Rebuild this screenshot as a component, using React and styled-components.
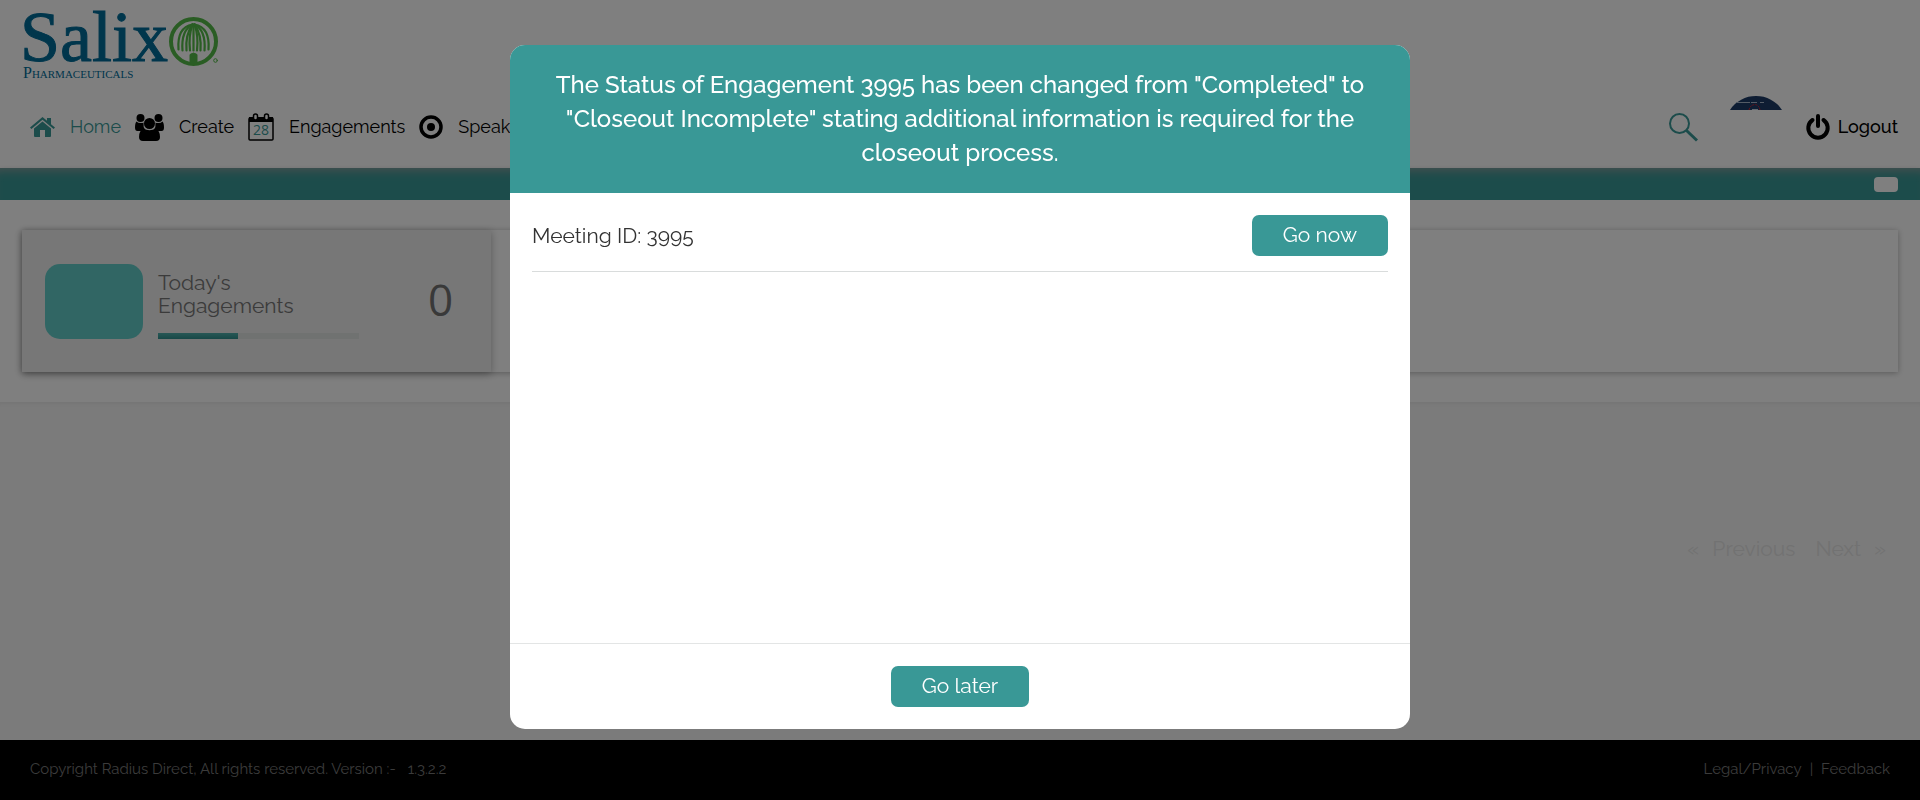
import React from "react";
import styled, { createGlobalStyle } from "styled-components";

const teal = "#399896";
const body = `"Raleway", "Lato", sans-serif`;

const GlobalStyle = createGlobalStyle`
  *, *::before, *::after { box-sizing: border-box; }
  body {
    margin: 0;
    background: #f7f7f7;
    color: #333;
    font-family: ${body};
    font-size: 21px;
  }
  button { font: inherit; border: 0; background: none; padding: 0; cursor: pointer; }
  a { color: inherit; text-decoration: none; }
  svg { display: block; flex: none; overflow: visible; }
`;

const Page = styled.div`
  min-height: 100vh;
  display: flex;
  flex-direction: column;
`;

const Header = styled.header`
  background: #fff;
`;

const LogoLink = styled.a`
  display: block;
  height: 86px;
  padding-left: 20px;
`;

const NavRow = styled.div`
  display: flex;
  justify-content: space-between;
  align-items: center;
  height: 82px;
  padding: 0 22px 0 30px;
`;

const Nav = styled.nav`
  display: flex;
  gap: 14px;
`;

const NavItem = styled.a`
  display: flex;
  align-items: center;
  gap: 15px;
  font-size: 18px;
  line-height: 28px;
  white-space: nowrap;
  color: ${(p) => (p.$active ? teal : "#000")};
`;

const Tools = styled.div`
  display: flex;
  align-items: center;
`;

const SearchButton = styled.button`
  margin-right: 32px;
`;

const Avatar = styled.span`
  margin-right: 24px;
`;

const LogoutButton = styled.button`
  display: flex;
  align-items: center;
  gap: 8px;
  color: #000;
  font-size: 18px;
  font-weight: 500;
  line-height: 28px;
`;

const Ribbon = styled.div`
  display: flex;
  justify-content: flex-end;
  align-items: center;
  height: 32px;
  padding: 0 22px;
  background: ${teal};
  box-shadow: inset 0 10px 10px -7px rgba(160, 160, 160, 0.8), 0 2px 6px rgba(0, 0, 0, 0.2);
`;

const RibbonButton = styled.button`
  width: 24px;
  height: 15px;
  border-radius: 4px;
  background: #fff;
`;

const Summary = styled.section`
  padding: 30px 22px;
  background: #fff;
`;

const Panel = styled.div`
  display: flex;
  min-height: 142px;
  box-shadow: 0 1px 6px rgba(0, 0, 0, 0.3);
`;

const StatCard = styled.article`
  width: 25%;
  min-width: 400px;
  display: flex;
  align-items: center;
  padding: 0 23px;
  background: #eee;
  box-shadow: 0 2px 8px rgba(0, 0, 0, 0.3);
`;

const StatSwatch = styled.div`
  flex: none;
  width: 98px;
  height: 75px;
  margin-right: 15px;
  border-radius: 15px;
  background: #62cdc9;
`;

const StatText = styled.div`
  flex: none;
  width: 201px;
  height: 75px;
  display: flex;
  flex-direction: column;
  justify-content: flex-end;
`;

const StatTitle = styled.h2`
  width: 160px;
  margin: 0 0 16px;
  color: #777;
  font-size: 21px;
  font-weight: 400;
  line-height: 23px;
`;

const Track = styled.div`
  height: 6px;
  background: #e0e4e3;
`;

const Fill = styled.div`
  width: 40%;
  height: 100%;
  background: linear-gradient(#4fb0ac, #2f908e);
`;

const StatValue = styled.div`
  flex: 1;
  padding: 0 0 4px 54px;
  text-align: center;
  color: #727272;
  font-family: "Open Sans", sans-serif;
  font-size: 44px;
  line-height: 60px;
`;

const Listing = styled.main`
  flex: 1;
  padding: 132px 34px 0;
  box-shadow: inset 0 6px 6px -6px rgba(0, 0, 0, 0.1);
`;

const Pager = styled.div`
  display: flex;
  justify-content: flex-end;
  gap: 20px;
`;

const PagerButton = styled.button`
  display: flex;
  gap: 13px;
  color: #e4e4e4;
  font-size: 21px;
  line-height: 30px;
`;

const Footer = styled.footer`
  display: flex;
  justify-content: space-between;
  align-items: center;
  height: 60px;
  padding: 0 30px 2px;
  background: #000;
  color: #777;
  font-size: 15px;
  line-height: 20px;
`;

const FooterGroup = styled.div`
  display: flex;
  gap: ${(p) => (p.$wide ? 12 : 8)}px;
`;

const Overlay = styled.div`
  position: fixed;
  inset: 0;
  display: flex;
  justify-content: center;
  align-items: flex-start;
  padding: 45px 20px;
  overflow: auto;
  background: rgba(0, 0, 0, 0.5);
`;

const Dialog = styled.div`
  width: 100%;
  max-width: 900px;
  border-radius: 15px;
  overflow: hidden;
  background: #fff;
`;

const DialogHeader = styled.div`
  padding: 23px 40px;
  background: ${teal};
`;

const DialogTitle = styled.h1`
  margin: 0;
  color: #fff;
  font-size: 24px;
  font-weight: 500;
  line-height: 34px;
  text-align: center;
`;

const DialogBody = styled.div`
  min-height: 450px;
  padding: 22px;
`;

const MeetingRow = styled.div`
  display: flex;
  justify-content: space-between;
  align-items: center;
  padding-bottom: 15px;
  border-bottom: 1px solid #d9dcdc;
`;

const DialogFooter = styled.div`
  display: flex;
  justify-content: center;
  padding: 22px;
  border-top: 1px solid #e3e5e5;
`;

const ActionButton = styled.button`
  min-width: 136px;
  padding: 6px 31px 7px;
  border-radius: 7px;
  background: ${teal};
  color: #fff;
  font-size: 21px;
  line-height: 28px;
`;

const LogoWord = styled.text`
  font-family: "Liberation Serif", serif;
  font-size: 72px;
  fill: #006c98;
  stroke: #006c98;
`;

const LogoTag = styled.text`
  font-family: "Liberation Serif", serif;
  font-size: 16px;
  font-variant: small-caps;
  fill: #006c98;
`;

const DateNumber = styled.text`
  font-family: "Open Sans", sans-serif;
  font-size: 14px;
  fill: ${teal};
`;

const Logo = () => (
  <svg width="205" height="84" viewBox="0 0 205 84" role="img" aria-label="Salix Pharmaceuticals">
    <LogoWord x="0" y="61">Salix</LogoWord>
    <LogoTag x="3" y="78">Pharmaceuticals</LogoTag>
    <g transform="translate(173.5 41.5)" fill="none" stroke="#54bb48" strokeLinecap="round">
      <circle r="22.5" strokeWidth="4" />
      <g strokeWidth="2.2">
        <path d="M-1 -17C-12 -15 -16 -5 -15 8" />
        <path d="M-1 -17C-9 -13 -12 -4 -11 9" />
        <path d="M-1 -17C-6 -10 -8 -3 -7 9" />
        <path d="M-1 -17C-4 -9 -4.500 0 -3.500 9" />
        <path d="M0 -17V9" />
        <path d="M1 -17C4 -9 4.500 0 3.500 9" />
        <path d="M1 -17C6 -10 8 -3 7 9" />
        <path d="M1 -17C9 -13 12 -4 11 9" />
        <path d="M1 -17C12 -15 16 -5 15 8" />
      </g>
      <path d="M-3.500 22V13Q0 10 3.500 13V22Z" fill="#54bb48" strokeWidth="1" />
      <circle cx="22" cy="19" r="1.800" strokeWidth="1" />
    </g>
  </svg>
);

const HomeIcon = () => (
  <svg width="25" height="20" viewBox="0 0 25 20" fill="currentColor" aria-hidden="true">
    <path d="M12.500 0L17 3.800V1H21V7.200L25 10.500L23.600 12L12.500 2.800L1.400 12L0 10.500Z" />
    <path d="M12.500 4.600L21 11.500V19Q21 20 20 20H15V13H10V20H5Q4 20 4 19V11.500Z" />
  </svg>
);

const UsersIcon = () => (
  <svg width="29" height="27" viewBox="0 0 29 27" fill="currentColor" aria-hidden="true">
    <circle cx="5.500" cy="4" r="4" />
    <circle cx="23.500" cy="4" r="4" />
    <path d="M1.500 7.500Q3.500 9.500 6.500 9Q8 9 8.500 8.500Q8 13 10 15.500Q8.500 17 5 17H2.500Q0 17 0 13.500Q0 9 1.500 7.500Z" />
    <path d="M27.500 7.500Q25.500 9.500 22.500 9Q21 9 20.500 8.500Q21 13 19 15.500Q20.500 17 24 17H26.500Q29 17 29 13.500Q29 9 27.500 7.500Z" />
    <circle cx="14.500" cy="9.500" r="5.500" />
    <path d="M8.500 14.500Q11 16.300 14.500 16.300T20.500 14.500Q25 16.500 25 23Q25 27 21 27H8Q4 27 4 23Q4 16.500 8.500 14.500Z" />
  </svg>
);

const CalendarIcon = () => (
  <svg width="26" height="28" viewBox="0 0 26 28" aria-hidden="true">
    <rect x="1" y="5" width="24" height="22" rx="1" fill="none" stroke="#000" strokeWidth="1.500" />
    <path d="M1 4H25V9H1Z" />
    <rect x="5.500" y="1" width="4" height="6" rx="2" fill="#fff" stroke="#000" strokeWidth="1.500" />
    <rect x="16.500" y="1" width="4" height="6" rx="2" fill="#fff" stroke="#000" strokeWidth="1.500" />
    <DateNumber x="13" y="22" textAnchor="middle">28</DateNumber>
  </svg>
);

const TargetIcon = () => (
  <svg width="24" height="24" viewBox="0 0 24 24" aria-hidden="true">
    <circle cx="12" cy="12" r="10" fill="none" stroke="#000" strokeWidth="3.500" />
    <circle cx="12" cy="12" r="4" />
  </svg>
);

const SearchIcon = () => (
  <svg width="29" height="28" viewBox="0 0 29 28" fill="none" stroke={teal} aria-hidden="true">
    <circle cx="10.500" cy="10.500" r="9.500" strokeWidth="2" />
    <path d="M17.500 17.500L28 27.500" strokeWidth="3" />
  </svg>
);

const AvatarImage = () => (
  <svg width="52" height="62" viewBox="0 0 52 62" role="img" aria-label="Profile">
    <path d="M0 14A31 31 0 0 1 52 14Z" fill="#1c3b66" />
    <path d="M6 6.500H36" stroke="#a9b8cc" strokeDasharray="14 1 6 3 4 2" />
    <path d="M19 14Q20 9 25 8.500Q29 9 30 14" fill="none" stroke="#d42030" strokeDasharray="2 1" />
    <path d="M22 13.500H28" stroke="#c8d2e0" />
  </svg>
);

const PowerIcon = () => (
  <svg width="24" height="26" viewBox="0 0 24 26" fill="none" stroke="#000" strokeWidth="4" strokeLinecap="round" aria-hidden="true">
    <path d="M6.500 6A9.700 9.700 0 1 0 17.500 6" />
    <path d="M12 2V12" />
  </svg>
);

const navItems = [
  { label: "Home", Icon: HomeIcon, active: true },
  { label: "Create", Icon: UsersIcon },
  { label: "Engagements", Icon: CalendarIcon },
  { label: "Speakers", Icon: TargetIcon },
];

export default function App() {
  return (
    <>
      <GlobalStyle />
      <Page>
        <Header>
          <LogoLink href="#"><Logo /></LogoLink>
          <NavRow>
            <Nav>
              {navItems.map(({ label, Icon, active }) => (
                <NavItem key={label} href="#" $active={active}>
                  <Icon />
                  {label}
                </NavItem>
              ))}
            </Nav>
            <Tools>
              <SearchButton type="button" aria-label="Search"><SearchIcon /></SearchButton>
              <Avatar><AvatarImage /></Avatar>
              <LogoutButton type="button"><PowerIcon />Logout</LogoutButton>
            </Tools>
          </NavRow>
        </Header>
        <Ribbon><RibbonButton type="button" aria-label="Toggle" /></Ribbon>
        <Summary>
          <Panel>
            <StatCard>
              <StatSwatch />
              <StatText>
                <StatTitle>Today's Engagements</StatTitle>
                <Track><Fill /></Track>
              </StatText>
              <StatValue>0</StatValue>
            </StatCard>
          </Panel>
        </Summary>
        <Listing>
          <Pager>
            <PagerButton type="button"><span>«</span>Previous</PagerButton>
            <PagerButton type="button">Next<span>»</span></PagerButton>
          </Pager>
        </Listing>
        <Footer>
          <FooterGroup $wide>
            <span>Copyright Radius Direct, All rights reserved. Version :-</span>
            <span>1.3.2.2</span>
          </FooterGroup>
          <FooterGroup>
            <a href="#">Legal/Privacy</a>
            <span>|</span>
            <a href="#">Feedback</a>
          </FooterGroup>
        </Footer>
      </Page>
      <Overlay>
        <Dialog role="dialog" aria-modal="true" aria-labelledby="status-title">
          <DialogHeader>
            <DialogTitle id="status-title">
              The Status of Engagement 3995 has been changed from "Completed" to
              "Closeout Incomplete" stating additional information is required for the
              closeout process.
            </DialogTitle>
          </DialogHeader>
          <DialogBody>
            <MeetingRow>
              <span>Meeting ID: 3995</span>
              <ActionButton type="button">Go now</ActionButton>
            </MeetingRow>
          </DialogBody>
          <DialogFooter>
            <ActionButton type="button">Go later</ActionButton>
          </DialogFooter>
        </Dialog>
      </Overlay>
    </>
  );
}
